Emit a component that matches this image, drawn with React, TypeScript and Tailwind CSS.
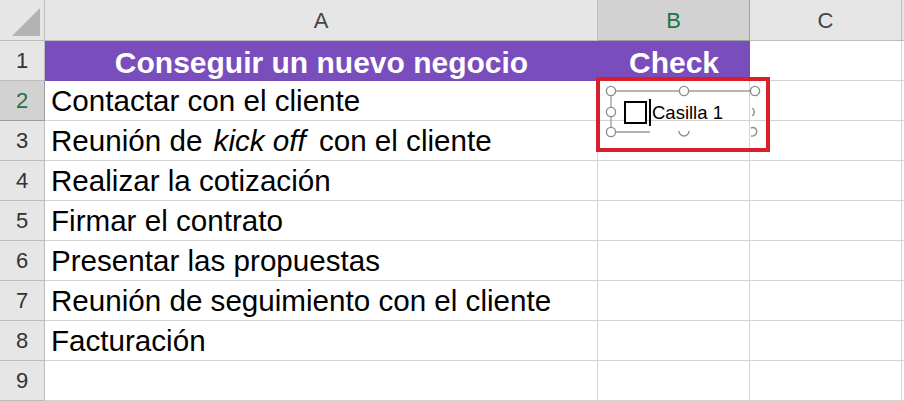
const rows: { n: number; content: React.ReactNode }[] = [
  { n: 2, content: "Contactar con el cliente" },
  {
    n: 3,
    content: (
      <>
        Reunión de <i className="ml-[3px] mr-[5px]">kick off</i> con el cliente
      </>
    ),
  },
  { n: 4, content: "Realizar la cotización" },
  { n: 5, content: "Firmar el contrato" },
  { n: 6, content: "Presentar las propuestas" },
  { n: 7, content: "Reunión de seguimiento con el cliente" },
  { n: 8, content: "Facturación" },
  { n: 9, content: "" },
];

const font = { fontFamily: '"Liberation Sans", Arial, sans-serif' };

function Handles() {
  return (
    <svg width="165" height="56" viewBox="0 0 165 56" className="absolute left-[600px] top-[85px]" fill="none">
      <path d="M11 6H155M11 6V47M11 47H50" stroke="#9a9a9a" strokeWidth="1.3" />
      {[
        [11, 6],
        [84, 6],
        [155, 6],
        [11, 27],
        [11, 47],
      ].map(([x, y]) => (
        <circle key={`${x}-${y}`} cx={x} cy={y} r="4.6" fill="white" stroke="#8d8d8d" strokeWidth="1.4" />
      ))}
      <path d="M152 23a4.6 4.6 0 0 1 0 8" stroke="#8d8d8d" strokeWidth="1.4" />
      <path d="M79 46a4.6 4.6 0 0 0 10 0" stroke="#8d8d8d" strokeWidth="1.4" />
      <path d="M151 43a4.6 4.6 0 0 1 4 0a4.6 4.6 0 0 1 -4 8" stroke="#8d8d8d" strokeWidth="1.4" />
    </svg>
  );
}

export default function App() {
  return (
    <div className="relative w-[904px] h-[401px] overflow-hidden bg-white" style={font}>
      <div className="grid grid-cols-[45px_553px_152px_152px_1fr] grid-rows-[41px_repeat(9,40px)]">
        {/* column headers */}
        <div className="relative bg-[#e6e6e6] border-r border-b border-[#bdbdbd]">
          <svg width="30" height="30" viewBox="0 0 30 30" className="absolute right-[3px] bottom-[3px]">
            <path d="M29 1V29H1Z" fill="#b3b3b3" />
          </svg>
        </div>
        <div className="bg-[#e6e6e6] border-r border-b border-[#bdbdbd] flex items-center justify-center text-[22px] text-[#444]">
          A
        </div>
        <div className="bg-[#d2d2d2] border-r border-b border-[#9e9e9e] flex items-center justify-center text-[22px] text-[#217346]">
          B
        </div>
        <div className="bg-[#e6e6e6] border-r border-b border-[#bdbdbd] flex items-center justify-center text-[22px] text-[#444]">
          C
        </div>
        <div className="bg-[#e6e6e6] border-b border-[#bdbdbd]" />

        {/* row 1 */}
        <div className="bg-[#e6e6e6] border-r border-b border-[#bdbdbd] flex items-center justify-center text-[22px] text-[#333]">
          1
        </div>
        <div className="bg-[#7a4dbd] flex items-center justify-center pt-[2px] text-white font-bold text-[30px]">
          Conseguir un nuevo negocio
        </div>
        <div className="bg-[#7a4dbd] flex items-center justify-center pt-[2px] text-white font-bold text-[30px]">
          Check
        </div>
        <div className="border-r border-b border-[#d4d4d4]" />
        <div className="border-b border-[#d4d4d4]" />

        {rows.map((r) => (
          <Row key={r.n} n={r.n}>
            {r.content}
          </Row>
        ))}
      </div>

      {/* selected form control */}
      <div className="absolute left-[596px] top-[77px] w-[174px] h-[75px] border-4 border-[#d7202b]" />
      <Handles />
      <div className="absolute left-[624px] top-[101px] w-[23px] h-[23px] border-2 border-black bg-white" />
      <div className="absolute left-[649px] top-[99px] w-[2px] h-[27px] bg-black" />
      <div className="absolute left-[652px] top-[102px] text-[18.5px] leading-[22px] text-black">Casilla 1</div>
    </div>
  );
}

function Row({ n, children }: { n: number; children: React.ReactNode }) {
  const active = n === 2;
  return (
    <>
      <div
        className={
          active
            ? "bg-[#d2d2d2] border-r border-b border-[#9e9e9e] flex items-center justify-center text-[22px] text-[#217346]"
            : "bg-[#e6e6e6] border-r border-b border-[#bdbdbd] flex items-center justify-center text-[22px] text-[#333]"
        }
      >
        {n}
      </div>
      <div className="border-r border-b border-[#d4d4d4] flex items-center pl-[6px] pt-[2px] text-[29.6px] text-black whitespace-nowrap">
        <span>{children}</span>
      </div>
      <div className="border-r border-b border-[#d4d4d4]" />
      <div className="border-r border-b border-[#d4d4d4]" />
      <div className="border-b border-[#d4d4d4]" />
    </>
  );
}
